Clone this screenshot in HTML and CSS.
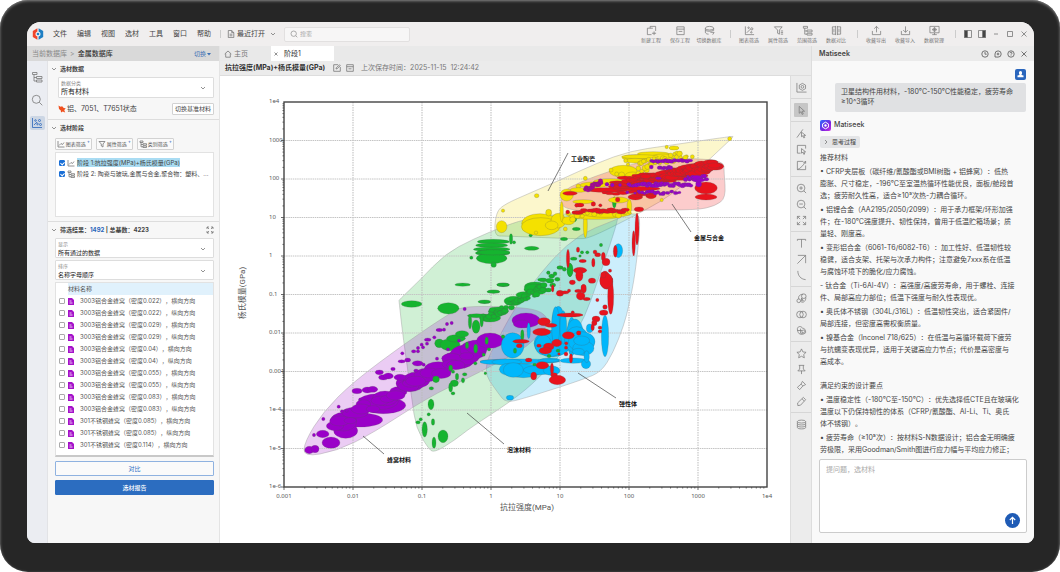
FILE: index.html
```html
<!DOCTYPE html>
<html lang="zh-CN">
<head>
    <meta charset="UTF-8">
    <meta name="viewport" content="width=device-width, initial-scale=1.0">
    <title>Matiseek 选材</title>
    <link rel="stylesheet" href="styles.css">
</head>
<body>
<div class="device">
<div class="screen">

    <header class="topbar">
        <svg class="logo" viewBox="0 0 12 12">
            <path d="M5.4 .2 .8 2.900v6.200l4.600 2.700V8.600A2.700 2.700 0 0 1 5.400 3.400z" fill="#f0452b"/>
            <path d="M6.600 .2 11.200 2.900v6.200l-4.600 2.700V8.600a2.700 2.700 0 0 0 0-5.200z" fill="#1f7fc4"/>
            <circle cx="6" cy="6" r="1.300" fill="#1f7fc4"/>
        </svg>
        <nav class="menu">
            <button>文件</button><button>编辑</button><button>视图</button><button>选材</button><button>工具</button><button>窗口</button><button>帮助</button>
        </nav>
        <i class="vsep"></i>
        <button class="recent">
            <svg class="ic" viewBox="0 0 8 8"><path d="M1.3 .5h3.4L6.8 2.6v5H1.3zM4.7 .5v2.1h2.1M2.6 4.2h2.8M2.6 5.8h2.8"/></svg>
            最近打开
            <svg class="ic chev" viewBox="0 0 8 8"><path d="M2 3l2 2 2-2"/></svg>
        </button>
        <label class="search">
            <svg class="ic" viewBox="0 0 8 8"><circle cx="3.7" cy="3.7" r="2.7"/><path d="M5.7 5.7l1.6 1.6"/></svg>
            <input type="text" placeholder="搜索" aria-label="搜索">
        </label>

        <div class="actions">
            <button><svg class="ic" viewBox="0 0 12 12"><path d="M4.5 3.5v-2h6v5M4 3.5H1.5v7H6M4 3.5h3.5M6.5 9h4.500M8.800 7v4"/></svg>新建工程</button>
            <button><svg class="ic" viewBox="0 0 12 12"><path d="M2 2h8v8.5H2zM2 4.5h8M4 7h4"/></svg>保存工程</button>
            <button><svg class="ic" viewBox="0 0 12 12"><ellipse cx="6" cy="3.5" rx="4.5" ry="2"/><path d="M1.5 3.5V8c0 1 1.5 2 3.5 2M10.5 3.5V6M1.5 5.7c1.2 1.5 7.5 1.5 9 0M7 8h4L9.5 10.5"/></svg>切换数据库</button>
        </div>
        <i class="vsep wide"></i>
        <div class="actions">
            <button><svg class="ic" viewBox="0 0 12 12"><path d="M1.5 1.5v9H11M3 8.5l4-4"/><circle cx="5" cy="3" r=".8"/><circle cx="8.5" cy="4.2" r="1.2"/><circle cx="8" cy="8" r=".8"/></svg>图表筛选</button>
            <button><svg class="ic" viewBox="0 0 12 12"><path d="M1.5 2H10L7 5.5V10L5 9V5.5zM8.5 6.5H11M8.500 8.300H11M8.500 10H11"/></svg>属性筛选</button>
            <button><svg class="ic" viewBox="0 0 12 12"><path d="M1.5 1.5H6v2H1.5zM3 3.5V10h2.5M3 6.5h2.5M5.5 5.5H11v2H5.5zM5.5 9H11v2H5.5z"/></svg>范围筛选</button>
            <button><svg class="ic" viewBox="0 0 12 12"><path d="M5 2H1.5v8H5M7 2h3.5v8H7M5 1v10M7 1v10M8.7 4v4M3.2 4v4"/></svg>数据对比</button>
        </div>
        <i class="vsep wide"></i>
        <div class="actions">
            <button><svg class="ic" viewBox="0 0 12 12"><path d="M1.5 6.5v4h9v-4M6 8V1.5M3.5 4L6 1.5 8.5 4"/></svg>收藏导出</button>
            <button><svg class="ic" viewBox="0 0 12 12"><path d="M1.5 6.5v4h9v-4M6 1.5V8M3.5 5.5L6 8l2.5-2.5"/></svg>收藏导入</button>
            <button><svg class="ic" viewBox="0 0 12 12"><path d="M1 1.5h10v7H1zM3.5 10.5h5M6 8.5v2M6 2.5v5M3.5 5h5"/><circle cx="6" cy="5" r="1.8"/></svg>数据管理</button>
        </div>
        <i class="vsep wide"></i>
        <div class="winbtns">
            <button aria-label="左侧栏"><svg class="ic" viewBox="0 0 10 10"><path d="M1.5 1.5h7v7h-7z"/><path d="M1.5 1.5h3v7h-3z" fill="#444"/></svg></button>
            <button aria-label="右侧栏"><svg class="ic" viewBox="0 0 10 10"><path d="M1.5 1.5h7v7h-7z"/><path d="M5.5 1.5h3v7h-3z" fill="#444"/></svg></button>
            <button aria-label="最小化"><svg class="ic" viewBox="0 0 10 10"><path d="M3 5h4"/></svg></button>
            <button aria-label="最大化"><svg class="ic" viewBox="0 0 10 10"><path d="M2.5 2.5h5v5h-5z"/></svg></button>
            <button aria-label="关闭"><svg class="ic" viewBox="0 0 10 10"><path d="M2.5 2.5l5 5M7.5 2.5l-5 5"/></svg></button>
        </div>
    </header>

    <div class="workspace">

        <!-- left: database + selection -->
        <aside class="left">
            <div class="crumb">
                <span>当前数据库</span><span>&gt;</span><b>金属数据库</b>
                <button>切换<svg viewBox="0 0 6 6"><path d="M1 2h4L3 4.5z" fill="#3c6fb4"/></svg></button>
            </div>
            <div class="left-body">
                <nav class="rail">
                    <button aria-label="目录"><svg class="ic" viewBox="0 0 12 12"><path d="M1.5 1.5H6v2H1.5zM3 3.5V10h2.5M3 6.5h2.5M5.5 5.5H11v2H5.5zM5.5 9H11v2H5.5z"/></svg></button>
                    <button aria-label="查找"><svg class="ic" viewBox="0 0 12 12"><circle cx="5.3" cy="5.3" r="4"/><path d="M8.3 8.3l3 3"/></svg></button>
                    <button aria-label="选材" class="on"><svg class="ic" viewBox="0 0 12 12"><path d="M1.5 1v9.5H11M3 8l3-3"/><circle cx="4.5" cy="3.5" r=".8"/><circle cx="8.5" cy="3.5" r="1"/><circle cx="6.5" cy="7" r=".8"/><circle cx="9.5" cy="7.5" r="1"/></svg></button>
                </nav>
                <div class="panel">
                    <section>
                        <h2><svg class="ic" viewBox="0 0 8 8"><path d="M2 3l2 2 2-2"/></svg>选材数据</h2>
                        <label class="field first">
                            <span>数据分类</span>
                            <select><option>所有材料</option></select>
                            <svg class="ic" viewBox="0 0 8 8"><path d="M2 3l2 2 2-2"/></svg>
                        </label>
                        <div class="base">
                            <svg viewBox="0 0 8 8"><path d="M.5 .5L2.500 1.800 4.200 1.300 5.400 2.800 7.800 3.500 6.200 5 7.200 7.500 4.700 6.400 3 7.600 2.800 5.400 1 4z" fill="#f0501e"/></svg>
                            <span>铝、7051、T7651状态</span>
                            <button class="btn">切换基准材料</button>
                        </div>
                    </section>
                    <section>
                        <h2><svg class="ic" viewBox="0 0 8 8"><path d="M2 3l2 2 2-2"/></svg>选材阶段</h2>
                        <div class="filters">
                            <button class="btn"><svg class="ic" viewBox="0 0 8 8"><path d="M1 1v6h6.5M2 5.5l2-2 1.5 1L7 2.5"/></svg>图表筛选<sup>+</sup></button>
                            <button class="btn"><svg class="ic" viewBox="0 0 8 8"><path d="M1 1.5h6L5 4v3L3.3 6V4z"/></svg>属性筛选<sup>+</sup></button>
                            <button class="btn"><svg class="ic" viewBox="0 0 8 8"><path d="M1 1h3v1.5H1zM2 2.5v4.3h2M2 4.5h2M4 3.7h3.5v1.5H4zM4 6h3.5v1.5H4z"/></svg>类别筛选<sup>+</sup></button>
                        </div>
                        <div class="stages">
                            <label><input type="checkbox" checked><svg class="ic" viewBox="0 0 8 8"><path d="M1 1v6h6.5M2 5.5l2-2 1.5 1L7 2.5"/></svg><mark>阶段 1:抗拉强度(MPa)+杨氏模量(GPa)</mark></label>
                            <label><input type="checkbox" checked><svg class="ic" viewBox="0 0 8 8"><path d="M1 1h3v1.5H1zM2 2.5v4.3h2M2 4.5h2M4 3.7h3.5v1.5H4zM4 6h3.5v1.5H4z"/></svg><span>阶段 2: 陶瓷与玻璃,金属与合金,聚合物：塑料、...</span></label>
                        </div>
                    </section>
                    <section>
                        <h2><svg class="ic" viewBox="0 0 8 8"><path d="M2 3l2 2 2-2"/></svg>筛选结果：<em>1492</em>&nbsp;| 总基数：4223
                            <svg class="ic expand" viewBox="0 0 8 8"><path d="M1 3V1h2M5 1h2v2M7 5v2H5M3 7H1V5M1 1l2 2M7 1L5 3M7 7L5 5M1 7l2-2"/></svg></h2>
                        <label class="field">
                            <span>显示</span>
                            <select><option>所有通过的数据</option></select>
                            <svg class="ic" viewBox="0 0 8 8"><path d="M2 3l2 2 2-2"/></svg>
                        </label>
                        <label class="field">
                            <span>排序</span>
                            <select><option>名称字母顺序</option></select>
                            <svg class="ic" viewBox="0 0 8 8"><path d="M2 3l2 2 2-2"/></svg>
                        </label>
                        <div class="results">
                            <table>
                                <thead><tr><th></th><th colspan="2">材料名称</th></tr></thead>
                                <tbody id="materials"></tbody>
                            </table>
                        </div>
                        <button class="big">对比</button>
                        <button class="big primary">选材报告</button>
                    </section>
                </div>
            </div>
        </aside>

        <!-- middle: chart -->
        <main class="center">
            <div class="tabs">
                <a href="#home"><svg class="ic" viewBox="0 0 8 8"><path d="M.7 4L4 1l3.3 3M1.7 3.5v3.7h4.6V3.5"/></svg>主页</a>
                <a href="#stage1" class="active"><svg class="ic" viewBox="0 0 8 8"><path d="M2.5 2.5l3 3M5.5 2.5l-3 3"/></svg>阶段1</a>
            </div>
            <div class="titlebar">
                <h1>抗拉强度(MPa)+杨氏模量(GPa)</h1>
                <button aria-label="编辑"><svg class="ic" viewBox="0 0 8 8"><path d="M5 .7H.7v6.6h6.6V3M3 5l.3-1.3L6.5 .8l.8 .8L4.2 4.7z"/></svg></button>
                <button aria-label="保存"><svg class="ic" viewBox="0 0 8 8"><path d="M.7 .7h6.6v6.6H.7zM.7 2.7h6.6M2.5 4.8h3"/></svg></button>
                <span>上次保存时间：2025-11-15&nbsp; 12:24:42</span>
            </div>
            <div class="chart-row">
                <svg id="chart" class="chart" viewBox="220 76 570 467"></svg>
                <div class="tools">
                    <div>
                        <button aria-label="图表设置"><svg class="ic" viewBox="0 0 12 12"><path d="M1 1v10h10.5"/><path d="M7 1.5l3.4 1.9v3.8L7 9.1 3.6 7.2V3.4z"/><circle cx="7" cy="5.3" r="1.5"/></svg></button>
                    </div>
                    <div>
                        <button aria-label="选择" class="on"><svg class="ic" viewBox="0 0 12 12"><path d="M3.5 1.5V9l2-1.7 1.2 3 1.2-.5-1.2-3h2.6z"/></svg></button>
                    </div>
                    <div>
                        <button aria-label="线选"><svg class="ic" viewBox="0 0 12 12"><path d="M1 10.5l6.5-9M6 4.5v5l1.5-1 1 2.3 1-.4-1-2.3h2z"/></svg></button>
                        <button aria-label="框选"><svg class="ic" viewBox="0 0 12 12"><path d="M5 10H1.5V1.5h9V5M6 5v5l1.5-1 1 2.3 1-.4-1-2.300h2z"/></svg></button>
                        <button aria-label="区域"><svg class="ic" viewBox="0 0 12 12"><path d="M10.5 6v4.5h-9v-9H8M1.5 10.5C5 9 8 6 10.5 1.5M8 3l2.5-1.5V4"/></svg></button>
                    </div>
                    <div>
                        <button aria-label="放大"><svg class="ic" viewBox="0 0 12 12"><circle cx="5.5" cy="5.5" r="4.2"/><path d="M8.6 8.6L11 11M3.5 5.5h4M5.5 3.5v4"/></svg></button>
                        <button aria-label="缩小"><svg class="ic" viewBox="0 0 12 12"><circle cx="5.5" cy="5.5" r="4.2"/><path d="M8.6 8.6L11 11M3.5 5.5h4"/></svg></button>
                        <button aria-label="全屏"><svg class="ic" viewBox="0 0 12 12"><path d="M1.5 4.5v-3h3M7.5 1.5h3v3M10.5 7.5v3h-3M4.5 10.5h-3v-3M1.5 1.5l3 3M10.5 1.5l-3 3M10.5 10.5l-3-3M1.5 10.5l3-3"/></svg></button>
                    </div>
                    <div>
                        <button aria-label="文字"><svg class="ic" viewBox="0 0 12 12"><path d="M1.5 3V1.5h9V3M6 1.5v9"/></svg></button>
                        <button aria-label="箭头"><svg class="ic" viewBox="0 0 12 12"><path d="M1.5 10.5l9-9M2 1.5h8.5V10"/></svg></button>
                        <button aria-label="弧线"><svg class="ic" viewBox="0 0 12 12"><path d="M2 1c0 5 3 9 8.5 9.5"/></svg></button>
                    </div>
                    <div>
                        <button aria-label="包络"><svg class="ic" viewBox="0 0 12 12"><circle cx="8.5" cy="3.5" r="2.5"/><circle cx="3" cy="8.5" r="2"/><path d="M3 6.5C2 3 5 1.5 7.5 1.3M5 9c3 3 6-1 5.7-4M6 5.5v3h2z"/></svg></button>
                        <button aria-label="交集"><svg class="ic" viewBox="0 0 12 12"><circle cx="4.3" cy="6" r="3.6"/><circle cx="7.7" cy="6" r="3.6"/></svg></button>
                        <button aria-label="隐藏"><svg class="ic" viewBox="0 0 12 12"><path d="M1.5 4C2 1 6 1 7 3.5c2 0 4 1.5 3.5 5-2 2-5.500 2-7 1C2 8 1.500 6 1.500 4zM1.500 6h5M5 4v5h3"/><circle cx="8" cy="7" r="1.500"/></svg></button>
                    </div>
                    <div>
                        <button aria-label="收藏"><svg class="ic" viewBox="0 0 12 12"><path d="M6 1l1.5 3.3L11 4.7 8.4 7.1l.7 3.6L6 9l-3.1 1.7 .7-3.6L1 4.7l3.5-.4z"/></svg></button>
                        <button aria-label="固定"><svg class="ic" viewBox="0 0 12 12"><path d="M3 1.5h6M4 1.5v4l-2 2h8l-2-2v-4M6 7.5V11"/></svg></button>
                        <button aria-label="标记"><svg class="ic" viewBox="0 0 12 12"><path d="M7 1.5L10.5 5l-3 1.5-3.500 4L1.500 8l4-3.500zM5.500 4.500l2 2"/></svg></button>
                        <button aria-label="橡皮"><svg class="ic" viewBox="0 0 12 12"><path d="M8 1.5L10.5 4 5 10l-3 .5-.2-3zM6.5 3L9 5.5"/></svg></button>
                    </div>
                    <div class="last">
                        <button aria-label="数据"><svg class="ic" viewBox="0 0 12 12"><ellipse cx="6" cy="2.8" rx="4.5" ry="1.6"/><path d="M1.5 2.8v6.5c0 2 9 2 9 0V2.8M1.5 5c0 2 9 2 9 0M1.5 7.2c0 2 9 2 9 0"/></svg></button>
                    </div>
                </div>
            </div>
        </main>

        <!-- right: assistant -->
        <aside class="chat">
            <div class="chat-head">
                <h2>Matiseek</h2>
                <button aria-label="历史"><svg class="ic" viewBox="0 0 8 8"><circle cx="4" cy="4" r="3.2"/><path d="M4 2v2.2h1.7"/></svg></button>
                <button aria-label="新对话"><svg class="ic" viewBox="0 0 8 8"><path d="M1 7V4a3.1 3.1 0 1 1 3 3.1zM2.7 4h2.6M4 2.7v2.6"/></svg></button>
                <button aria-label="帮助"><svg class="ic" viewBox="0 0 8 8"><circle cx="4" cy="4" r="3.2"/><path d="M3 3.2c0-1.400 2-1.400 2 0 0 .8-1 .8-1 1.500M4 5.500v.5"/></svg></button>
                <button aria-label="关闭"><svg class="ic" viewBox="0 0 8 8"><path d="M1.5 1.5l5 5M6.5 1.5l-5 5"/></svg></button>
            </div>
            <div class="chat-body">
                <div class="ask">
                    <svg viewBox="0 0 11 11"><rect width="11" height="11" rx="2" fill="#2a66bd"/><path d="M3.9 3.7a1.6 1.6 0 0 1 3.2 0c0 1-.6 1.400-.6 2.200l2 .7v1.600h-6V6.600l2-.7c0-.8-.6-1.200-.6-2.200z" fill="#fff"/></svg>
                    <p>卫星结构件用材料，-180°C-150°C性能稳定，疲劳寿命<br>≥10^3循环</p>
                </div>
                <div class="bot">
                    <svg viewBox="0 0 11 11"><defs><linearGradient id="bg" x2="1" y2="1"><stop stop-color="#2b6cff"/><stop offset=".6" stop-color="#7a22e0"/><stop offset="1" stop-color="#d030e0"/></linearGradient></defs><rect width="11" height="11" rx="2" fill="url(#bg)"/><path d="M5.5 2.2l2.9 1.7v3.3L5.5 8.8 2.6 7.2V3.9z" fill="none" stroke="#fff"/><circle cx="5.5" cy="5.5" r="1.2" fill="#fff"/></svg>
                    Matiseek
                </div>
                <button class="think"><svg class="ic" viewBox="0 0 8 8"><path d="M3 2l2 2-2 2"/></svg>思考过程</button>
                <div class="answer">
                    <p>推荐材料</p>
                    <p>• CFRP夹层板（碳纤维/氰酸酯或BMI树脂 + 铝蜂窝）：低热<br>膨胀、尺寸稳定，-196℃至室温热循环性能优良，面板/舱段首<br>选；疲劳耐久性高，适合≥10⁵次热-力耦合循环。</p>
                    <p>• 铝锂合金（AA2195/2050/2099）：用于承力框架/环形加强<br>件；在-180℃强度提升、韧性保持，曾用于低温贮箱场景；质<br>量轻、刚度高。</p>
                    <p>• 变形铝合金（6061-T6/6082-T6）：加工性好、低温韧性较<br>稳健，适合支架、托架与次承力构件；注意避免7xxx系在低温<br>与腐蚀环境下的脆化/应力腐蚀。</p>
                    <p>- 钛合金（Ti-6Al-4V）：高强度/高疲劳寿命，用于螺栓、连接<br>件、局部高应力部位；低温下强度与耐久性表现优。</p>
                    <p>• 奥氏体不锈钢（304L/316L）：低温韧性突出，适合紧固件/<br>局部连接，但密度高需权衡质量。</p>
                    <p>• 镍基合金（Inconel 718/625）：在低温与高循环载荷下疲劳<br>与抗蠕变表现优异，适用于关键高应力节点；代价是高密度与<br>高成本。</p>
                    <p class="next">满足约束的设计要点</p>
                    <p>• 温度稳定性（-180℃至-150℃）：优先选择低CTE且在玻璃化<br>温度以下仍保持韧性的体系（CFRP/氰酸酯、Al-Li、Ti、奥氏<br>体不锈钢）。</p>
                    <p>• 疲劳寿命（≥10⁵次）：按材料S-N数据设计；铝合金无明确疲<br>劳极限，采用Goodman/Smith图进行应力幅与平均应力修正；</p>
                </div>
            </div>
            <div class="composer">
                <textarea placeholder="提问题，选材料" aria-label="提问"></textarea>
                <button aria-label="发送"><svg viewBox="0 0 15 15"><path d="M7.5 11V4.5M4.8 7l2.7-2.7L10.2 7" fill="none" stroke="#fff" stroke-width="1.2"/></svg></button>
            </div>
        </aside>
    </div>
</div>
</div>
<script src="chart.js"></script>
</body>
</html>
```
FILE: styles.css
```css
* {
    box-sizing: border-box;
    margin: 0;
    padding: 0;
}

body {
    font-family: Inter, "Noto Sans CJK SC", sans-serif;
    font-size: 7px;
    line-height: 12px;
    text-spacing-trim: space-all;
    color: #444;
    background: #fff;
}

button,
input,
select,
textarea {
    font: inherit;
    color: inherit;
    border: none;
    background: none;
    outline: none;
}

button {
    display: flex;
    align-items: center;
    justify-content: center;
    white-space: nowrap;
}

svg {
    display: block;
    flex: none;
}

.ic {
    width: 8px;
    height: 8px;
    fill: none;
    stroke: #777;
    stroke-width: 0.8;
}

.device {
    height: 100vh;
    padding: 22px 26px 29px 27px;
    border-radius: 28px;
    background: #262626;
    box-shadow: inset 0 1px 3px #888;
}

.screen {
    height: 100%;
    display: flex;
    flex-direction: column;
    overflow: hidden;
    border-radius: 14px 14px 8px 8px;
    background: #fff;
}

/* top bar */
.topbar {
    display: flex;
    align-items: center;
    height: 24px;
    flex: none;
    padding: 0 5px;
    background: #f0eeee;
}

.logo {
    width: 12px;
    height: 12px;
}

.menu {
    display: flex;
    gap: 10px;
    margin-left: 9px;
}

.vsep {
    width: 1px;
    height: 8px;
    margin: 0 6px 0 9px;
    background: #ccc;
}

.vsep.wide {
    margin: 0 5px 0 8px;
}

.recent {
    gap: 2px;
}

.chev {
    margin-left: 2px;
}

.search {
    display: flex;
    align-items: center;
    gap: 2px;
    width: 126px;
    height: 15px;
    margin: 0 auto 0 7px;
    padding: 0 5px;
    border: 1px solid #e2e0e0;
    border-radius: 2px;
    background: #f7f6f6;
}

.search .ic {
    stroke: #999;
}

.search input {
    flex: 1;
    min-width: 0;
    font-size: 6px;
}

::placeholder {
    color: #aaa;
}

.actions {
    display: flex;
    gap: 3px;
}

.actions button {
    flex-direction: column;
    width: 26px;
    font-size: 5px;
    line-height: 8px;
    color: #777;
}

.actions .ic {
    width: 11px;
    height: 11px;
}

.winbtns {
    display: flex;
    gap: 4px;
    margin-left: 2px;
}

.winbtns .ic {
    width: 10px;
    height: 10px;
}

.workspace {
    display: flex;
    flex: 1;
    min-height: 0;
}

/* left column */
.left {
    display: flex;
    flex-direction: column;
    width: 193px;
    border-right: 1px solid #e4e4e4;
}

.crumb {
    display: flex;
    align-items: center;
    gap: 3px;
    height: 15px;
    flex: none;
    padding: 0 7px 0 5px;
    color: #888;
    background: #d9d9d9;
}

.crumb b {
    font-weight: 500;
    color: #333;
}

.crumb button {
    margin-left: auto;
    font-size: 6px;
    color: #3c6fb4;
}

.crumb svg {
    width: 6px;
    height: 6px;
}

.left-body {
    display: flex;
    flex: 1;
    min-height: 0;
}

.rail {
    display: flex;
    flex-direction: column;
    align-items: center;
    gap: 9px;
    width: 21px;
    padding-top: 9px;
    background: #ebedf2;
    border-right: 1px solid #e2e3e6;
}

.rail button {
    width: 15px;
    height: 14px;
    border-radius: 2px;
}

.rail .ic {
    width: 12px;
    height: 12px;
}

.rail .on {
    background: #ccd6e4;
}

.rail .on .ic {
    stroke: #2b66ba;
}

.panel {
    flex: 1;
    min-width: 0;
    background: #f7f7f7;
}

.panel section {
    padding: 2px 5px 4px 7px;
    border-bottom: 1px solid #ddd;
}

.panel section:last-child {
    border-bottom: none;
}

.panel h2 {
    display: flex;
    align-items: center;
    height: 12px;
    margin: 0 0 2px -5px;
    font-size: 6px;
    font-weight: 700;
}

.panel h2 .ic {
    margin-right: 2px;
}

.panel h2 .expand {
    margin-left: auto;
    margin-right: 0;
}

.panel em {
    font-style: normal;
    color: #2b66ba;
}

.field {
    display: grid;
    grid-template-columns: 1fr 12px;
    align-items: center;
    height: 20px;
    margin-bottom: 2px;
    padding: 1px 2px;
    border: 1px solid #ddd;
    border-radius: 1px;
    background: #fff;
}

.field.first {
    height: 21px;
    margin-left: 3px;
    margin-bottom: 5px;
}

.field span {
    grid-area: 1 / 1;
    font-size: 5px;
    line-height: 8px;
    color: #888;
}

.field select {
    grid-area: 2 / 1;
    appearance: none;
    height: 9px;
    font-size: 6px;
    line-height: 9px;
    color: #222;
}

.field.first select {
    font-size: 7px;
}

.field .ic {
    grid-area: 1 / 2 / 3;
}

.base {
    display: flex;
    align-items: center;
    gap: 1px;
    margin: 0 0 0 3px;
}

.base svg {
    width: 8px;
    height: 8px;
}

.btn {
    height: 12px;
    border: 1px solid #d2d2d2;
    border-radius: 1px;
    background: #fafafa;
}

.base .btn {
    margin-left: auto;
    padding: 0 2px;
    font-size: 6px;
    background: #fff;
}

.filters {
    display: flex;
    gap: 4px;
    margin: 4px 0 2px;
}

.filters .btn {
    width: 37px;
    gap: 1px;
    font-size: 5px;
    color: #555;
}

.filters sup {
    font-size: 5px;
    line-height: 5px;
    align-self: flex-start;
    color: #2b66ba;
}

.stages {
    height: 65px;
    padding: 4px 3px;
    font-size: 6px;
    line-height: 9px;
    border: 1px solid #e2e2e2;
    background: #fff;
}

.stages label {
    display: flex;
    align-items: center;
    gap: 2px;
    height: 11px;
    white-space: nowrap;
}

.stages mark {
    color: inherit;
    background: #a9dcf3;
}

input[type="checkbox"] {
    appearance: none;
    flex: none;
    width: 6px;
    height: 6px;
    border: 1px solid #aaa;
    border-radius: 1px;
    background: #fff;
}

input[type="checkbox"]:checked {
    border-color: #1a6fd6;
    background: #1a6fd6;
}

input[type="checkbox"]:checked::before {
    content: "";
    display: block;
    width: 2px;
    height: 3px;
    margin-left: 1px;
    border: solid #fff;
    border-width: 0 1px 1px 0;
    transform: rotate(45deg);
}

.results {
    height: 175px;
    margin-bottom: 4px;
    overflow: hidden;
    border: 1px solid #e2e2e2;
    border-bottom: 2px solid #c8c8c8;
    background: #fff;
}

.results table {
    width: 100%;
    border-collapse: collapse;
    font-size: 6px;
    line-height: 12px;
    color: #555;
}

.results th {
    height: 12px;
    font-weight: 400;
    text-align: left;
    background: #e0f1fc;
}

.results th:first-child {
    width: 12px;
    background: #fff;
}

.results td {
    height: 12px;
    white-space: nowrap;
}

.results td:first-child {
    padding-left: 3px;
}

.results td:nth-child(2) {
    width: 12px;
}

.results .doc {
    width: 6px;
    height: 7px;
}

.results td input {
    display: block;
}

.big {
    width: 100%;
    height: 15px;
    margin-bottom: 4px;
    font-size: 6px;
    color: #2b6cc4;
    border: 1px solid #8fb2e0;
    border-radius: 1px;
    background: #fafafa;
}

.big.primary {
    font-weight: 500;
    color: #fff;
    border-color: #2c6dc0;
    background: #2c6dc0;
}

/* chart column */
.center {
    display: flex;
    flex: 1;
    flex-direction: column;
    min-width: 0;
}

.tabs {
    display: flex;
    height: 15px;
    flex: none;
    background: #e9e9e9;
}

.tabs a {
    display: flex;
    align-items: center;
    gap: 2px;
    width: 51px;
    padding-left: 4px;
    color: #777;
    text-decoration: none;
}

.tabs .active {
    width: 63px;
    gap: 4px;
    padding-left: 1px;
    color: #333;
    background: #fff;
}

.titlebar {
    display: flex;
    align-items: center;
    gap: 5px;
    height: 15px;
    flex: none;
    padding: 0 5px;
    color: #777;
    background: #ebebeb;
    border-bottom: 1px solid #ddd;
}

.titlebar h1 {
    margin-right: 3px;
    font-size: 7px;
    font-weight: 700;
    color: #333;
}

.titlebar span {
    margin-left: 2px;
}

.chart-row {
    display: flex;
    flex: 1;
    min-height: 0;
}

.chart {
    flex: 1;
    min-width: 0;
    height: 100%;
}

.chart text {
    font-family: "Noto Sans", "Noto Sans CJK SC", sans-serif;
    font-size: 6px;
    fill: #555;
}

.chart .title {
    font-family: Roboto, "Noto Sans CJK SC", sans-serif;
    font-size: 8px;
    text-anchor: middle;
}

.chart .name {
    font-weight: 700;
    fill: #111;
}

.tools {
    width: 21px;
    flex: none;
    background: #ececec;
    border-left: 1px solid #ddd;
}

.tools div {
    display: flex;
    flex-direction: column;
    align-items: center;
    padding: 3px 0;
    border-bottom: 1px solid #d6d6d6;
}

.tools .last {
    border-bottom: none;
}

.tools button {
    width: 14px;
    height: 16px;
}

.tools .on {
    height: 14px;
    margin: 1px 0;
    border-radius: 1px;
    background: #c6c6c6;
}

.tools .ic {
    width: 11px;
    height: 11px;
}

/* assistant */
.chat {
    display: flex;
    flex-direction: column;
    width: 223px;
    background: #f9f9f9;
    border-left: 1px solid #ddd;
}

.chat-head {
    display: flex;
    align-items: center;
    gap: 5px;
    height: 15px;
    flex: none;
    padding: 0 6px 0 7px;
    background: #ebebeb;
}

.chat-head h2 {
    margin-right: auto;
    font-size: 7px;
    font-weight: 600;
}

.chat-head .ic {
    stroke: #555;
}

.chat-body {
    flex: 1;
    min-height: 0;
    padding: 8px 8px 0 8px;
    overflow: hidden;
}

.ask {
    display: flex;
    flex-direction: column;
    align-items: flex-end;
    gap: 3px;
    margin-bottom: 7px;
}

.ask svg,
.bot svg {
    width: 11px;
    height: 11px;
}

.ask p {
    width: 191px;
    padding: 4px 6px 5px;
    line-height: 10px;
    white-space: nowrap;
    border-radius: 2px;
    background: #e0e1e3;
}

.bot {
    display: flex;
    align-items: center;
    gap: 3px;
    font-weight: 500;
}

.think {
    gap: 2px;
    height: 12px;
    margin-top: 5px;
    padding: 0 4px 0 2px;
    font-size: 6px;
    border-radius: 2px;
    background: #e4e5e7;
}

.answer {
    margin-top: 4px;
    white-space: nowrap;
}

.answer p {
    margin-bottom: 2px;
}

.answer .next {
    margin-top: 12px;
}

.composer {
    display: flex;
    flex-direction: column;
    align-items: flex-end;
    height: 74px;
    flex: none;
    margin: 4px 7px 10px 7px;
    padding: 4px 6px;
    border: 1px solid #ccc;
    border-radius: 2px;
    background: #fff;
}

.composer textarea {
    flex: 1;
    width: 100%;
    resize: none;
}

.composer button {
    width: 15px;
    height: 15px;
    border-radius: 50%;
    background: #1f5bb5;
}

.composer svg {
    width: 15px;
    height: 15px;
}
```
FILE: chart.js
```js
const NS = 'http://www.w3.org/2000/svg';
const chart = document.getElementById('chart');

const RED = '#e8131d', GREEN = '#15b42f', YELLOW = '#f4e100', BLUE = '#00b7fb', PURPLE = '#9a00c8';

function add(tag, attrs, text) {
    const el = document.createElementNS(NS, tag);
    for (const key in attrs) el.setAttribute(key, attrs[key]);
    if (text) el.textContent = text;
    chart.appendChild(el);
    return el;
}

// plot frame, one decade = 69 x 38.5
const X0 = 284, Y0 = 102, DX = 69, DY = 38.5;
const X1 = X0 + 7 * DX, Y1 = Y0 + 10 * DY;

function drawAxes() {
    for (let i = 1; i < 7; i++) add('path', { d: `M${X0 + i * DX} ${Y0}V${Y1}`, stroke: '#bbb', 'stroke-dasharray': '1.5 1' });
    for (let i = 1; i < 10; i++) add('path', { d: `M${X0} ${Y0 + i * DY}H${X1}`, stroke: '#c4c4c4', 'stroke-dasharray': '1.5 .7' });
    let ticks = '';
    for (let k = 1; k < 10; k++) {
        const f = Math.log10(k);
        for (let i = 0; i < 10; i++) ticks += `M${X0} ${Y1 - (i + f) * DY}h${k === 1 ? -3 : -1.5}`;
        for (let i = 0; i < 7; i++) ticks += `M${X0 + (i + f) * DX} ${Y1}v${k === 1 ? 3 : 1.5}`;
    }
    add('path', { d: ticks, stroke: '#444', 'stroke-width': 0.8 });
    add('rect', { x: X0, y: Y0, width: X1 - X0, height: Y1 - Y0, fill: 'none', stroke: '#444', 'stroke-width': 1.4 });

    ['1e4', '1000', '100', '10', '1', '0.1', '0.01', '0.001', '1e-4', '1e-5', '1e-6'].forEach((t, i) =>
        add('text', { x: 269, y: Y0 + i * DY + 1 }, t));
    ['0.001', '0.01', '0.1', '1', '10', '100', '1000', '1e4'].forEach((t, i) =>
        add('text', { x: X0 + i * DX, y: 498, 'text-anchor': 'middle' }, t));
    add('text', { x: 527, y: 510, class: 'title' }, '抗拉强度(MPa)');
    add('text', { x: 0, y: 0, class: 'title', transform: 'translate(245 293) rotate(-90)' }, '杨氏模量(GPa)');
}

// closed smooth outline through the points
function hull(points, fill) {
    const n = points.length;
    const mid = (a, b) => [(a[0] + b[0]) / 2, (a[1] + b[1]) / 2];
    let d = 'M' + mid(points[n - 1], points[0]);
    points.forEach((p, i) => d += `Q${p} ${mid(p, points[(i + 1) % n])}`);
    add('path', { d: d + 'Z', fill, 'fill-opacity': 0.2, stroke: '#999', 'stroke-opacity': 0.6, 'stroke-width': 0.7 });
}

// ellipses [cx, cy, rx, ry] in thirds of a unit from the given origin
function bubbles(ox, oy, fill, list) {
    list.forEach(([cx, cy, rx, ry = rx]) => add('ellipse', {
        cx: ox + cx / 3, cy: oy + cy / 3, rx: rx / 3, ry: ry / 3,
        fill, stroke: '#555', 'stroke-opacity': 0.55, 'stroke-width': 0.4
    }));
}

let seed = 7;
function rnd() {
    seed = (seed * 16807) % 2147483647;
    return seed / 2147483647;
}

// n ellipses spread along a line, w = half thickness of the band
function band(ox, oy, fill, n, [xa, ya, xb, yb], w, rx, ry) {
    const list = [];
    for (let i = 0; i < n; i++) {
        const t = (i + rnd() * 0.8) / n;
        const k = 0.7 + rnd() * 0.5;
        list.push([xa + (xb - xa) * t, ya + (yb - ya) * t + (rnd() - 0.5) * 2 * w, rx * k, ry * k]);
    }
    bubbles(ox, oy, fill, list);
}

hull([[494, 236], [496, 212], [505, 204], [530, 193], [560, 180], [597, 163], [630, 151], [665, 146], [733, 136], [733, 137], [730, 140], [698, 170], [680, 188], [660, 202], [632, 217], [590, 238], [578, 239], [505, 236]], '#f0d800');
hull([[561, 212], [561, 192], [580, 182], [610, 171], [640, 162], [660, 159], [690, 158], [724, 161], [724, 172], [726, 198], [715, 206], [697, 210], [640, 210]], '#f00000');
hull([[399, 301], [399, 300], [420, 280], [445, 254], [473, 239], [507, 225], [530, 218], [560, 214], [618, 211], [618, 219], [611, 242], [598, 280], [585, 317], [567, 348], [537, 380], [513, 400], [470, 428], [455, 440], [434, 453], [428, 448], [416, 428], [412, 400], [403, 337]], '#15b42f');
hull([[506, 403], [498, 393], [482, 370], [500, 335], [515, 308], [530, 287], [553, 258], [580, 234], [610, 222], [639, 210], [640, 230], [635, 275], [629, 305], [624, 325], [613, 353], [601, 372], [584, 379], [557, 388], [525, 398]], '#00a8f0');
hull([[303, 457], [305, 441], [323, 412], [353, 382], [407, 342], [453, 311], [467, 306], [510, 307], [535, 309], [547, 316], [548, 326], [527, 347], [503, 360], [470, 377], [427, 398], [373, 433], [337, 451]], '#9a00c8');

drawAxes();

// foams
bubbles(480, 90, GREEN, [
    [40, 455, 48, 7], [35, 466, 48, 7], [35, 478, 55, 7], [38, 489, 52, 9], [35, 505, 46, 16], [41, 524, 8],
    [93, 447, 5, 16], [102, 457, 5], [152, 436, 5], [155, 475, 22, 6], [252, 447, 11, 5], [289, 417, 12, 5],
    [363, 465, 5], [285, 379, 6, 16], [403, 337, 6, 17], [306, 487, 5], [322, 487, 5], [281, 506, 10, 5],
    [270, 540, 8, 20], [240, 533, 9, 5], [300, 498, 4], [205, 548, 5], [70, 585, 18, 5], [165, 590, 32, 14], [190, 570, 12, 5]
]);
bubbles(470, 240, GREEN, [
    [99, 134, 18, 5], [71, 155, 18, 5], [44, 186, 17, 5], [216, 119, 13, 5], [235, 98, 5], [245, 108, 9, 6],
    [240, 122, 12, 7], [262, 118, 8, 6], [255, 101, 6], [248, 135, 9, 6], [235, 150, 10, 6], [283, 88, 6], [190, 148, 28, 16],
    [210, 150, 20, 13], [160, 165, 22, 10], [130, 183, 28, 14], [85, 214, 30, 13], [60, 234, 32, 12], [270, 82, 9, 5], [300, 90, 9, 20]
]);
band(470, 240, GREEN, 38, [40, 235, 225, 140], 13, 9, 7);
bubbles(260, 220, GREEN, [
    [455, 252, 31, 10], [565, 265, 32, 17], [608, 194, 23, 5], [729, 194, 19, 5], [700, 215, 19, 5], [673, 245, 19, 5],
    [634, 113, 5], [700, 97, 50, 8], [650, 287, 28, 6], [630, 305, 5, 22], [648, 320, 12, 20], [665, 303, 5, 18],
    [538, 370, 14, 13], [570, 374, 30, 18], [588, 355, 28, 11], [606, 342, 20, 10]
]);

// honeycombs
bubbles(260, 220, PURPLE, [
    [148, 690, 14, 11], [165, 687, 12, 11], [213, 668, 27, 17], [188, 642, 19, 11], [300, 600, 68, 21], [257, 632, 36, 23],
    [250, 605, 40, 28], [225, 618, 26, 14], [285, 578, 40, 16], [370, 556, 67, 25], [355, 545, 60, 24], [375, 535, 38, 22],
    [310, 552, 22, 13], [291, 513, 15, 8], [322, 510, 16, 9], [338, 508, 15, 9], [358, 457, 12, 7], [370, 472, 14, 8], [385, 468, 15, 9],
    [415, 515, 26, 15], [450, 490, 42, 25], [470, 480, 40, 24], [420, 472, 18, 9], [445, 498, 32, 16], [500, 465, 38, 20], [535, 447, 42, 22],
    [473, 430, 16, 8], [425, 424, 11, 5], [443, 420, 9, 6], [595, 420, 48, 26], [615, 405, 45, 30], [640, 390, 40, 28], [650, 380, 35, 20], [690, 362, 40, 23],
    [575, 415, 30, 15], [538, 330, 10, 5], [503, 359, 10, 5], [190, 597, 5], [162, 645, 5], [236, 560, 5], [246, 574, 5], [260, 572, 5], [300, 538, 4],
    [399, 447, 7, 5], [427, 400, 5], [461, 394, 7, 5], [474, 384, 5], [474, 394, 5], [485, 374, 5], [489, 382, 5], [501, 371, 5], [523, 352, 5],
    [552, 329, 5], [561, 312, 5], [575, 309, 5], [614, 267, 5], [597, 362, 5], [564, 388, 5], [531, 416, 5], [468, 452, 7, 5], [491, 434, 5]
]);
band(260, 220, PURPLE, 14, [230, 615, 640, 400], 10, 26, 13);
bubbles(470, 240, PURPLE, [[168, 241, 42, 22], [155, 252, 25, 12]]);
bubbles(260, 220, GREEN, [
    [680, 362, 5, 11], [621, 376, 5, 10], [647, 386, 6, 13], [671, 404, 5], [687, 388, 5], [646, 430, 5], [729, 350, 5],
    [572, 444, 6, 9], [579, 455, 5], [591, 470, 5, 10], [614, 463, 7, 5], [609, 481, 5, 8], [583, 490, 12, 10], [572, 502, 6, 14], [579, 520, 6, 5],
    [528, 478, 10, 10], [514, 505, 7, 5], [513, 553, 9, 16], [506, 583, 5], [519, 606, 5, 10], [494, 628, 8, 23], [482, 598, 5], [474, 607, 7, 5],
    [549, 649, 15, 19], [522, 668, 6, 17], [676, 460, 4]
]);

// elastomers
bubbles(470, 240, BLUE, [
    [128, 316, 34, 38], [248, 310, 56, 40], [265, 255, 20, 56], [257, 260, 12, 60], [280, 262, 10, 50], [305, 290, 14, 58], [315, 285, 26, 48],
    [320, 300, 36, 40], [335, 305, 40, 30], [340, 325, 32, 22], [335, 302, 24, 14], [220, 315, 25, 30], [240, 330, 30, 20], [359, 265, 10, 13],
    [405, 288, 11, 62], [176, 272, 5, 24], [150, 364, 120, 7], [75, 366, 45, 7], [110, 366, 45, 9], [240, 360, 30, 6], [115, 388, 27, 18],
    [160, 392, 55, 21], [210, 390, 50, 14], [130, 390, 30, 22], [245, 392, 25, 14], [310, 362, 40, 8], [348, 372, 14, 14], [350, 350, 8, 18],
    [325, 335, 18, 10], [120, 473, 11, 7], [235, 362, 32, 5]
]);
bubbles(480, 90, BLUE, [[415, 482, 13, 21]]);
bubbles(470, 240, GREEN, [[157, 285, 5, 16], [99, 290, 5], [135, 332, 5, 8], [138, 304, 5], [264, 332, 6, 5], [237, 348, 6, 5], [194, 374, 6, 4]]);

// technical ceramics
bubbles(480, 90, YELLOW, [
    [65, 410, 16, 18], [69, 362, 5], [180, 400, 55, 29], [182, 410, 58, 27], [235, 392, 22, 22], [215, 406, 19, 13], [168, 428, 5], [206, 368, 9, 10],
    [265, 392, 20, 12], [256, 417, 6], [245, 365, 5, 30], [316, 405, 6, 38], [260, 315, 20, 18], [170, 317, 7, 6], [316, 265, 6], [295, 289, 7],
    [310, 335, 32, 6], [345, 378, 80, 10], [380, 370, 75, 12], [415, 330, 30, 9], [448, 350, 7, 22], [390, 275, 50, 9],
    [340, 285, 40, 9], [295, 300, 25, 7], [430, 244, 42, 18], [458, 256, 22, 10], [393, 240, 6], [410, 252, 6], [425, 255, 9],
    [468, 203, 42, 9], [520, 192, 48, 7], [550, 200, 35, 8], [480, 200, 55, 6], [465, 212, 30, 7], [437, 212, 6], [444, 223, 5],
    [582, 174, 15, 6], [560, 171, 5], [600, 190, 6], [620, 199, 5], [637, 200, 6], [749, 146, 6], [572, 196, 7], [590, 200, 7],
    [525, 215, 8], [510, 225, 8], [500, 240, 8], [485, 245, 7], [475, 250, 7], [495, 213, 7], [545, 330, 5], [475, 235, 7]
]);
band(480, 90, YELLOW, 24, [475, 225, 620, 195], 13, 7, 7);
band(480, 90, YELLOW, 12, [260, 380, 440, 365], 10, 8, 7);

// metals and alloys
bubbles(480, 90, RED, [
    [270, 310, 22, 6], [300, 345, 12, 6], [290, 346, 6], [340, 342, 7], [361, 346, 5], [413, 329, 7], [263, 366, 6],
    [466, 321, 22, 9], [470, 317, 18, 5], [513, 317, 16, 9], [477, 358, 14, 7], [678, 294, 34, 18], [678, 321, 33, 9],
    [710, 229, 21, 11], [700, 228, 25, 10], [380, 300, 62, 7], [425, 290, 40, 8], [470, 275, 45, 8], [470, 296, 70, 7],
    [471, 417, 6, 48], [461, 460, 5, 38], [406, 484, 6, 18], [264, 506, 5, 28], [294, 479, 5, 8], [340, 518, 5, 13],
    [308, 513, 11, 5], [345, 486, 6], [353, 494, 9, 6], [370, 500, 6, 13], [378, 516, 12, 11], [300, 541, 20, 9], [298, 556, 11, 18],
    [277, 577, 9, 7], [336, 572, 11, 8], [390, 542, 5], [375, 560, 13, 17], [388, 568, 10, 7], [380, 575, 19, 23], [310, 594, 7, 10]
]);
band(480, 90, RED, 60, [410, 278, 660, 250], 14, 26, 6);
band(480, 90, RED, 55, [540, 258, 705, 228], 15, 20, 8);
band(480, 90, RED, 18, [285, 364, 440, 362], 4, 12, 5);
band(480, 90, RED, 10, [365, 310, 520, 312], 7, 13, 5);
band(480, 90, RED, 8, [440, 270, 500, 255], 9, 14, 6);
bubbles(470, 240, RED, [
    [422, 170, 9, 53], [408, 122, 19, 23], [400, 105, 8, 9], [401, 218, 13, 8], [405, 201, 7], [382, 180, 5], [248, 145, 4, 11],
    [270, 160, 11, 9], [285, 157, 12, 5], [297, 152, 5], [341, 146, 8, 13], [325, 153, 11, 5], [332, 168, 13, 12], [350, 177, 11, 5],
    [300, 225, 39, 6], [308, 217, 5], [222, 245, 19, 12], [243, 256, 18, 6], [215, 276, 27, 11], [153, 304, 25, 6], [148, 317, 9, 6],
    [295, 286, 18, 11], [326, 279, 7], [260, 309, 15, 11], [236, 320, 16, 11], [226, 332, 19, 10], [207, 317, 7, 5], [378, 237, 12, 9],
    [373, 249, 8, 8], [368, 262, 5, 10], [390, 263, 6, 5], [390, 274, 6, 5], [289, 310, 5], [288, 323, 5], [267, 342, 4], [288, 342, 6], [303, 355, 5, 14],
    [176, 360, 10, 6], [217, 376, 19, 11], [246, 387, 5, 18], [252, 405, 10, 7], [262, 420, 25, 14], [191, 408, 9, 12]
]);

// purple points laid over the metals
band(480, 90, PURPLE, 26, [510, 213, 635, 212], 2, 6, 5);
band(480, 90, PURPLE, 36, [445, 285, 635, 284], 4, 7, 6);
band(480, 90, PURPLE, 22, [465, 308, 600, 308], 4, 6, 5);
band(480, 90, PURPLE, 14, [615, 266, 685, 262], 7, 6, 6);
band(480, 90, PURPLE, 12, [535, 236, 575, 232], 3, 5, 5);
band(480, 90, '#b0009c', 22, [315, 300, 365, 274], 5, 6, 6);
bubbles(480, 90, PURPLE, [[381, 283, 6], [397, 285, 6], [420, 285, 5], [442, 307, 5], [514, 231, 6], [656, 282, 9], [535, 265, 9, 4], [655, 270, 20, 6], [650, 262, 15, 6]]);

// family names with leader lines
[
    ['工业陶瓷', 571, 161, 'M568 153L548 191'],
    ['金属与合金', 694, 240, 'M672 204L691 232'],
    ['弹性体', 619, 406, 'M578 373L616 398'],
    ['泡沫材料', 507, 452, 'M467 413L504 444'],
    ['蜂窝材料', 387, 462, 'M363 436L384 454']
].forEach(([name, x, y, d]) => {
    add('path', { d, stroke: '#444', 'stroke-width': 0.7 });
    add('text', { x, y, class: 'name' }, name);
});

// result list
const materials = [
    '3003铝合金蜂窝（密度0.022），横向方向', '3003铝合金蜂窝（密度0.022），纵向方向',
    '3003铝合金蜂窝（密度0.029），横向方向', '3003铝合金蜂窝（密度0.029），纵向方向',
    '3003铝合金蜂窝（密度0.04），横向方向', '3003铝合金蜂窝（密度0.04），纵向方向',
    '3003铝合金蜂窝（密度0.055），横向方向', '3003铝合金蜂窝（密度0.055），纵向方向',
    '3003铝合金蜂窝（密度0.083），横向方向', '3003铝合金蜂窝（密度0.083），纵向方向',
    '301不锈钢蜂窝（密度0.085），横向方向', '301不锈钢蜂窝（密度0.085），纵向方向',
    '301不锈钢蜂窝（密度0.114），横向方向'
];
document.getElementById('materials').innerHTML = materials.map((name, i) => `
    <tr>
        <td><input type="checkbox" id="m${i}"></td>
        <td><svg class="doc" viewBox="0 0 6 7"><path d="M0 0h4l2 2v5H0z" fill="#a512c9"/><path d="M1.5 3h2M1.5 5h3" stroke="#fff" stroke-width=".8"/></svg></td>
        <td><label for="m${i}">${name}</label></td>
    </tr>`).join('');
```
